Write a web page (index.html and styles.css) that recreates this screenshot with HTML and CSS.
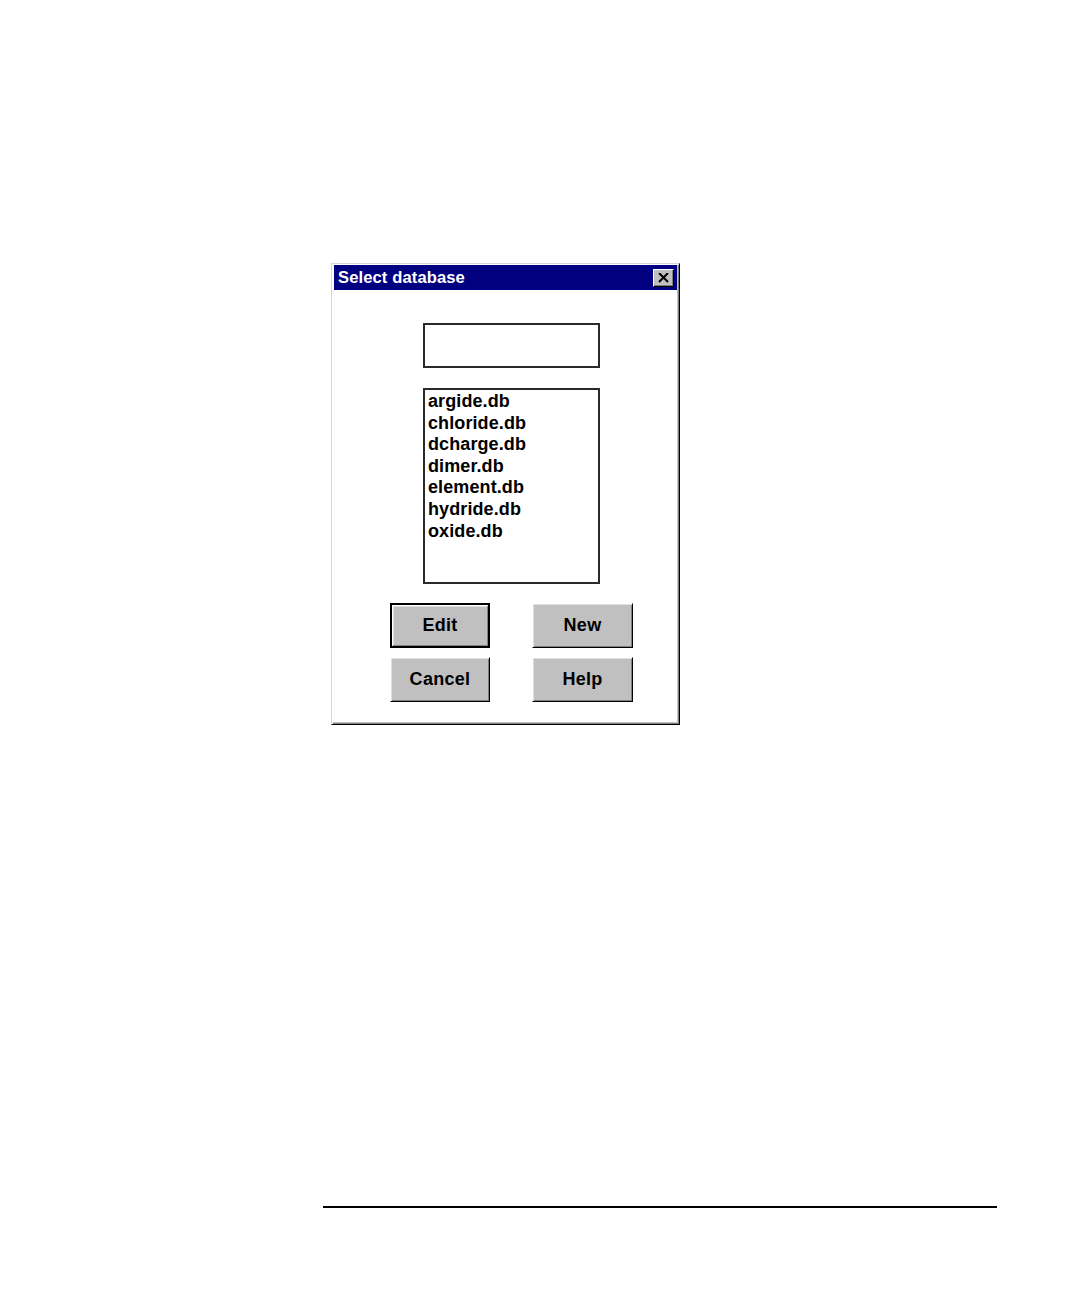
FILE: index.html
```html
<!DOCTYPE html>
<html>
<head>
<meta charset="utf-8">
<link rel="stylesheet" href="styles.css">
</head>
<body>
<div class="page">
  <div class="dialog">
    <div class="titlebar">
      <span class="title">Select database</span>
      <span class="close">
        <svg width="11" height="10" viewBox="0 0 11 10"><path d="M1 0 L10 9 M10 0 L1 9" stroke="#000" stroke-width="2"/></svg>
      </span>
    </div>
    <div class="body">
      <div class="field"></div>
      <div class="list">
        <div>argide.db</div>
        <div>chloride.db</div>
        <div>dcharge.db</div>
        <div>dimer.db</div>
        <div>element.db</div>
        <div>hydride.db</div>
        <div>oxide.db</div>
      </div>
      <div class="buttons">
        <div class="btn default"><span>Edit</span></div>
        <div class="btn"><span>New</span></div>
        <div class="btn"><span>Cancel</span></div>
        <div class="btn"><span>Help</span></div>
      </div>
    </div>
  </div>
  <div class="rule"></div>
</div>
</body>
</html>
```
FILE: styles.css
```css
html, body {
  margin: 0;
  padding: 0;
  background: #fff;
}
body {
  font-family: "Liberation Sans", Arial, sans-serif;
  font-weight: bold;
  color: #000;
}
.page {
  padding-top: 263px;
  padding-left: 331px;
  height: 1298px;
  box-sizing: border-box;
}
.dialog {
  width: 349px;
  height: 462px;
  box-sizing: border-box;
  border: 1px solid;
  border-color: #d8d8d8 #000 #000 #d8d8d8;
  box-shadow: inset 1px 1px #fff, inset -1px -1px #808080, inset -2px -2px #c0c0c0;
  padding: 1px 2px 2px 2px;
  background: #fff;
  display: flex;
  flex-direction: column;
}
.titlebar {
  height: 25px;
  background: #000080;
  display: flex;
  align-items: center;
  justify-content: space-between;
  padding: 0 3px 0 4px;
}
.title {
  color: #fff;
  font-size: 16.6px;
  letter-spacing: 0.1px;
}
.close {
  width: 21px;
  height: 18px;
  box-sizing: border-box;
  background: #c0c0c0;
  border: 1px solid;
  border-color: #fff #000 #000 #fff;
  box-shadow: inset -1px -1px #808080;
  display: flex;
  align-items: center;
  justify-content: center;
}
.body {
  padding-top: 33px;
  padding-left: 89px;
  display: flex;
  flex-direction: column;
}
.field {
  width: 177px;
  height: 45px;
  box-sizing: border-box;
  border: 2px solid #2a2a2a;
  background: #fff;
}
.list {
  margin-top: 20px;
  width: 177px;
  height: 196px;
  box-sizing: border-box;
  border: 2px solid #2a2a2a;
  padding: 1px 0 0 3px;
  font-size: 18px;
  line-height: 21.6px;
  letter-spacing: 0.1px;
}
.buttons {
  margin-top: 19px;
  margin-left: -33px;
  display: grid;
  grid-template-columns: 100px 101px;
  grid-auto-rows: 45px;
  column-gap: 42px;
  row-gap: 9px;
}
.btn {
  box-sizing: border-box;
  background: #c0c0c0;
  border: 1px solid;
  border-color: #fff #000 #000 #fff;
  box-shadow: inset 1px 1px #dfdfdf, inset -1px -1px #808080;
  display: flex;
  align-items: center;
  justify-content: center;
  font-size: 18px;
  letter-spacing: 0.3px;
}
.btn.default {
  border: 2px solid #000;
  box-shadow: inset 1px 1px #fff, inset -1px -1px #808080, inset 2px 2px #dfdfdf;
}
.rule {
  margin-top: 481px;
  margin-left: -8px;
  width: 674px;
  border-top: 2px solid #000;
}
```
